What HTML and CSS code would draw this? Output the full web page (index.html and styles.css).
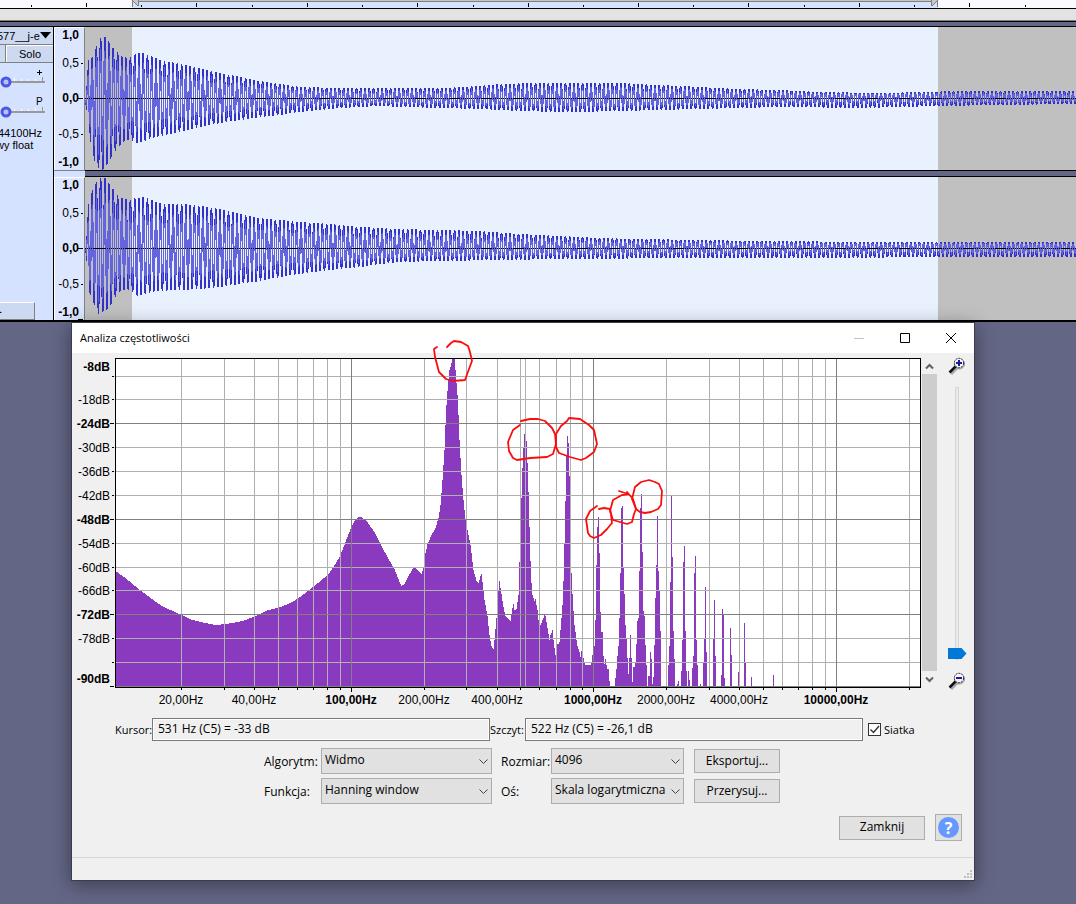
FILE: index.html
```html
<!DOCTYPE html>
<html lang="pl">
<head>
<meta charset="utf-8">
<title>Analiza częstotliwości</title>
<link rel="stylesheet" href="styles.css">
</head>
<body>
<main class="desktop">
  <svg class="timeline" viewBox="0 0 1076 9" preserveAspectRatio="none" shape-rendering="crispEdges" aria-hidden="true">
    <rect width="1076" height="9" fill="#f9f9ff"/>
    <rect x="132" width="806" height="8" fill="#d5e3ff"/>
    <rect x="138" width="793" height="1" fill="#c4c4c0"/>
    <rect x="138" y="1" width="793" height="1" fill="#808080"/>
    <path d="M133 0h5v6l-5-5zM932 0h5l-5 6z" fill="#c8c8c4"/>
    <path d="M132.500 0v7M138.500 0v6M132 0l6 6M937.500 0v7M931.500 0v6M938 0l-6 6" stroke="#808080" fill="none"/>
    <path id="ticks" stroke="#000" fill="none"/>
    <rect y="8" width="1076" height="1"/>
  </svg>
  <div class="strip"></div>
  <div class="gutter"></div>
  <section class="track">
    <aside class="panel">
      <button class="track-name"><span>577__j-e</span><svg width="11" height="7" viewBox="0 0 11 7"><path d="M0 0h11L5.500 6.500z"/></svg></button>
      <div class="mute-solo"><button class="mute" aria-label="Wycisz"></button><button class="solo">Solo</button></div>
      <svg class="knobs" viewBox="0 63 53 60" width="53" height="60">
        <g fill="none"><path d="M11 82h34" stroke="#999" stroke-width="2"/><path d="M14.500 78v3M21.500 79v2M28.500 79v2M35.500 79v2" stroke="#fff"/><path d="M42.500 77v5" stroke="#999"/><circle cx="6" cy="82" r="4" fill="#b9c2ee" stroke="#4a58e8" stroke-width="3"/></g>
        <g fill="none"><path d="M11 112h34" stroke="#999" stroke-width="2"/><path d="M14.500 109v2M21.500 109v2M28.500 109v2M35.500 108v3" stroke="#fff"/><path d="M42.500 107v5" stroke="#999"/><circle cx="6" cy="112" r="4" fill="#b9c2ee" stroke="#4a58e8" stroke-width="3"/></g>
        <path d="M37 72.500h5M39.500 70v5" stroke="#000"/>
        <text x="36" y="105" font-size="10">P</text>
      </svg>
      <p class="rate">44100Hz</p>
      <p class="format">wy float</p>
      <button class="collapse" aria-label="Zwiń"><svg width="5" height="4" viewBox="0 0 5 4"><path d="M0 0l5 4H0z"/></svg></button>
    </aside>
    <div class="channels">
      <div class="channel">
        <div class="scale"><b>1,0</b><span>0,5</span><b>0,0</b><span>-0,5</span><b>-1,0</b>
          <svg class="marks" width="6" height="143" viewBox="0 0 6 143"><path d="M3 36.500h2M0 71.500h5M3 107.500h2" stroke="#000"/></svg></div>
        <svg class="wave" data-wave="0" viewBox="0 0 991 143" preserveAspectRatio="none" shape-rendering="crispEdges"></svg>
      </div>
      <div class="divider"><i></i><b></b></div>
      <div class="channel">
        <div class="scale"><b>1,0</b><span>0,5</span><b>0,0</b><span>-0,5</span><b>-1,0</b>
          <svg class="marks" width="6" height="143" viewBox="0 0 6 143"><path d="M3 36.500h2M0 71.500h5M3 107.500h2M0 142.500h5" stroke="#000"/></svg></div>
        <svg class="wave" data-wave="1" viewBox="0 0 991 143" preserveAspectRatio="none" shape-rendering="crispEdges"></svg>
      </div>
    </div>
  </section>

  <section class="dialog" role="dialog" aria-labelledby="dialog-title">
    <header class="titlebar">
      <h1 id="dialog-title">Analiza częstotliwości</h1>
      <button aria-label="Minimalizuj"><svg width="10" height="10"><path d="M0 5.500h10" stroke="#c4c4c4"/></svg></button>
      <button aria-label="Maksymalizuj"><svg width="10" height="10"><path d="M.5.500h9v9h-9z" stroke="#000" fill="none"/></svg></button>
      <button aria-label="Zamknij okno"><svg width="10" height="10"><path d="M0 0l10 10M10 0L0 10" stroke="#000" fill="none"/></svg></button>
    </header>
    <div class="plot-row">
      <svg class="plot" width="849" height="356" viewBox="72 353 849 356">
        <g shape-rendering="crispEdges">
          <rect x="115" y="358" width="806" height="330"/>
          <rect x="116" y="359" width="804" height="328" fill="#fff"/>
          <path id="spectrum" fill="#8a3abe"/>
          <path id="grid-light" stroke="#b0b0b0" fill="none"/>
          <path id="grid-dark" stroke="#808080" fill="none"/>
          <path id="axis-marks" stroke="#000" fill="none"/>
        </g>
        <g id="axis-labels" font-size="12"></g>
        <g fill="none" stroke="#fb0d0d" stroke-width="1.800" stroke-linejoin="round" stroke-linecap="round">
          <path d="M437 347l-3 2 1 8 4 15 7 7 7 2 12-1 4-11 3-8-2-9-2-6-7-4-7-1-3 2-4 4"/>
          <path d="M521 421l9-2 8 0 7 2 7 7 3 6 1 10-3 10-6 3-17 1-13 2-4-2-4-7-1-9 5-12 7-5"/>
          <path d="M569 418l11 1 9 6 5 5 3 14-3 8-8 6-5 2-11-3-11-4-3-6 0-13 5-8 6-5z"/>
          <path d="M597 506l-7 5-4 8 2 14 2 3 4 2 7-3 6-6 5-6-1-9-1-5-6-1-5 1"/>
          <path d="M619 491l9 3-6 1-9 5-3 11 3 9 7 2 7 2 5-2 2-8 2-5-3-10-6-7"/>
          <path d="M641 482l8-2 6 2 4 2 3 7-1 14-3 4-7 3-6 1-5-1-4-3-4-10 3-12z"/>
        </g>
      </svg>
      <div class="scrollbar">
        <button aria-label="W górę"><svg width="9" height="7"><path d="M1 5.500l3.500-3.500L8 5.500" fill="none" stroke="#606060" stroke-width="2"/></svg></button>
        <div class="bar"></div>
        <button aria-label="W dół"><svg width="9" height="7"><path d="M1 1.500L4.500 5 8 1.500" fill="none" stroke="#606060" stroke-width="2"/></svg></button>
      </div>
      <div class="zoom">
        <svg width="18" height="18" viewBox="0 0 18 18"><path d="M3 17l7-7" stroke="#aaa" stroke-width="3"/><circle cx="11.500" cy="7" r="5" fill="#bbb" stroke="#999"/><path d="M1.500 15.500l6-6" stroke="#111" stroke-width="2.500"/><circle cx="11" cy="6" r="4.700" fill="#f5f5fa" stroke="#222" stroke-dasharray="2 1"/><path d="M8 6h6M11 3v6" stroke="#1717a8" stroke-width="2"/></svg>
        <input type="range" min="0" max="100" value="100" aria-label="Powiększenie">
        <svg width="18" height="18" viewBox="0 0 18 18"><path d="M3 17l7-7" stroke="#aaa" stroke-width="3"/><circle cx="11.500" cy="7" r="5" fill="#bbb" stroke="#999"/><path d="M1.500 15.500l6-6" stroke="#111" stroke-width="2.500"/><circle cx="11" cy="6" r="4.700" fill="#f5f5fa" stroke="#222" stroke-dasharray="2 1"/><path d="M8 6h6" stroke="#1717a8" stroke-width="2"/></svg>
      </div>
    </div>
    <div class="readouts">
      <label class="cursor-label" for="cursor">Kursor:</label><input id="cursor" readonly value="531 Hz (C5) = -33 dB">
      <label class="peak-label" for="peak">Szczyt:</label><input id="peak" readonly value="522 Hz (C5) = -26,1 dB">
      <label class="check"><input type="checkbox" checked><svg width="13" height="13"><path d="M2.500 6.500l3 3 5.500-6.500" fill="none" stroke="#333" stroke-width="1.400"/></svg>Siatka</label>
    </div>
    <div class="options">
      <label for="algorithm">Algorytm:</label>
      <span class="combo"><select id="algorithm"><option>Widmo</option></select><svg width="9" height="6"><path d="M.5.500l4 4 4-4" fill="none" stroke="#444"/></svg></span>
      <label for="size">Rozmiar:</label>
      <span class="combo"><select id="size"><option>4096</option></select><svg width="9" height="6"><path d="M.5.500l4 4 4-4" fill="none" stroke="#444"/></svg></span>
      <button class="push">Eksportuj...</button>
      <label for="function">Funkcja:</label>
      <span class="combo"><select id="function"><option>Hanning window</option></select><svg width="9" height="6"><path d="M.5.500l4 4 4-4" fill="none" stroke="#444"/></svg></span>
      <label for="axis">Oś:</label>
      <span class="combo"><select id="axis"><option>Skala logarytmiczna</option></select><svg width="9" height="6"><path d="M.5.500l4 4 4-4" fill="none" stroke="#444"/></svg></span>
      <button class="push">Przerysuj...</button>
    </div>
    <div class="actions"><button class="push">Zamknij</button><button class="help" aria-label="Pomoc"><span>?</span></button></div>
    <footer class="statusbar"><svg width="9" height="9" viewBox="0 0 9 9"><path d="M6 0h2v2H6zM3 3h2v2H3zM6 3h2v2H6zM0 6h2v2H0zM3 6h2v2H3zM6 6h2v2H6z" fill="#bfbfbf"/></svg></footer>
  </section>
</main>
<script src="app.js"></script>
</body>
</html>
```

FILE: styles.css
```css
* { box-sizing: border-box; }
body { margin: 0; background: #636685; font-family: "Liberation Sans", Arial, sans-serif; font-size: 12px; color: #000; }
button { margin: 0; padding: 0; border: 0; background: none; font: inherit; color: inherit; }
p, h1 { margin: 0; }
svg { display: block; flex: none; }
.desktop { position: relative; min-height: 100vh; overflow: hidden; }

.timeline { width: 100%; height: 9px; }
.strip { height: 12px; background: #e3e3e3; border-bottom: 1px solid #808080; }
.gutter { height: 6px; border-top: 1px solid #000; border-bottom: 1px solid #000; background: #636685; }
.track { display: flex; border-bottom: 2px solid #000; }
.panel { width: 54px; display: flex; flex-direction: column; overflow: hidden; border-right: 1px solid #000; background: #d5e2ff; font-size: 11px; }
.track-name { display: flex; align-items: center; height: 18px; margin-left: -3px; border-bottom: 1px solid #808080; background: #cdd9f0; white-space: nowrap; }
.mute-solo { display: flex; height: 18px; border-bottom: 1px solid #808080; background: #cdd9f0; }
.mute { width: 6px; border-right: 1px solid #808080; }
.solo { flex: 1; border-left: 1px solid #fff; border-top: 1px solid #fff; }
.rate, .format { height: 12px; line-height: 12px; white-space: nowrap; }
.rate { margin: 4px 0 0 -2px; }
.format { margin-left: -4px; }
.collapse { margin-top: auto; width: 35px; height: 18px; border-top: 1px solid #fff; border-right: 1px solid #808080; border-bottom: 1px solid #808080; background: #cdd9f0; }
.collapse svg { margin-left: -3px; }

.channels { flex: 1; min-width: 0; }
.channel { display: flex; height: 143px; }
.scale { position: relative; width: 31px; padding-right: 5px; display: grid; grid-template-rows: 28px 35px 36px 28px 14px; border-right: 1px solid #808080; border-left: 1px solid #fff; border-top: 1px solid #fff; background: #dce7ff; line-height: 14px; text-align: right; }
.marks { position: absolute; right: 0; top: -1px; }
.wave { flex: 1 1 0; min-width: 0; width: 100%; height: 143px; }
.divider { display: flex; height: 7px; }
.divider i { width: 31px; border-top: 1px solid #808080; background: #d5e2ff; }
.divider b { flex: 1; border-top: 1px solid #000; border-bottom: 1px solid #000; background: #636685; }

.dialog { position: absolute; left: 71px; top: 322px; width: 904px; border: 1px solid #3b3d4c; background: #f0f0f0; box-shadow: 0 4px 18px rgba(0, 0, 0, .4); font-family: "Open Sans", "Noto Sans", sans-serif; font-size: 12px; }
.titlebar { display: flex; height: 30px; background: #fff; }
.titlebar h1 { flex: 1; padding-left: 8px; font-size: 11px; line-height: 30px; font-weight: 400; }
.titlebar button { width: 46px; display: grid; place-items: center; }
.plot-row { display: flex; }
.plot { overflow: visible; position: relative; font-family: "Liberation Sans", Arial, sans-serif; }
.scrollbar { width: 15px; height: 329px; margin: 5px 0 0 1px; display: flex; flex-direction: column; }
.scrollbar button { height: 16px; display: grid; place-items: center; }
.bar { flex: 1; background: #cdcdcd; }
.zoom { width: 19px; height: 333px; margin: 4px 0 0 10px; display: flex; flex-direction: column; justify-content: space-between; align-items: center; }
.zoom input { appearance: none; writing-mode: vertical-lr; direction: ltr; width: 19px; height: 273px; margin: 0; background: none; }
.zoom input::-webkit-slider-runnable-track { width: 4px; height: 100%; border: 1px solid #d6d6d6; background: #e7eaea; }
.zoom input::-webkit-slider-thumb { appearance: none; width: 19px; height: 11px; margin-left: -8px; background: #0078d7; clip-path: polygon(0 0, 14px 0, 100% 50%, 14px 100%, 0 100%); }
.readouts { display: flex; align-items: center; height: 23px; margin: 9px 0 0 43px; }
.readouts label { font-size: 11px; }
.cursor-label { width: 37px; }
.peak-label { width: 35px; }
.readouts > input { width: 338px; height: 23px; padding: 0 5px 2px; border: 1px solid #7a7a7a; outline: 1px solid #fff; outline-offset: -2px; background: #f0f0f0; font: inherit; }
.check { display: flex; align-items: center; gap: 3px; margin-left: 5px; position: relative; }
.check input { appearance: none; width: 13px; height: 13px; margin: 0; border: 1px solid #333; background: #fff; }
.check svg { position: absolute; left: 0; }
.options { display: grid; grid-template-columns: 57px 171px 59px 133px 96px; row-gap: 4px; align-items: center; margin: 7px 0 0 192px; }
.options label:nth-of-type(even) { padding-left: 9px; }
.options .push { margin-left: 10px; }
.combo { position: relative; }
.combo select { appearance: none; display: block; width: 100%; height: 26px; padding: 0 3px 3px; border: 1px solid #adadad; border-radius: 0; background: #e1e1e1; color: #000; font: inherit; }
.combo svg { position: absolute; right: 4px; top: 11px; pointer-events: none; }
.push { width: 86px; height: 24px; padding-bottom: 2px; border: 1px solid #adadad; background: #e1e1e1; }
.actions { display: flex; justify-content: flex-end; align-items: center; gap: 10px; margin: 10px 12px 0 0; }
.help { display: grid; place-items: center; width: 27px; height: 27px; border: 1px solid #adadad; background: #e1e1e1; }
.help span { display: grid; place-items: center; width: 21px; height: 21px; border-radius: 50%; background: #6699ff; color: #fff; font-size: 16px; font-weight: 700; }
.statusbar { display: flex; justify-content: flex-end; align-items: flex-end; height: 23px; margin-top: 16px; border-top: 1px solid #d7d7d7; padding: 0 1px 1px 0; }
```

FILE: app.js
```js
const interp = (pts, x) => {
  let i = 0;
  while (i < pts.length - 2 && pts[i + 1][0] <= x) i++;
  const [x0, y0] = pts[i], [x1, y1] = pts[i + 1];
  return y0 + (y1 - y0) * Math.min(1, Math.max(0, (x - x0) / (x1 - x0)));
};
const pairs = s => s.trim().split(/\s+/).map(p => p.split(',').map(Number));

// Timeline ticks
let ticks = '';
for (let i = 0; i < 10; i++) {
  ticks += `M${Math.round(31 + i * 110.4)}.5 5v2`;
  if (i < 9) ticks += `M${Math.round(86 + i * 110.4)}.5 3v4`;
}
document.getElementById('ticks').setAttribute('d', ticks);

// Upper and lower envelopes of each channel, as x,y pairs
const envelopes = [
  { base: 27, mid: 98,
    top: pairs('85,90 88,60 93,56 97,42 101,37 105,37 110,44 115,50 120,56 128,58 132,56 136,53 144,53 150,56 160,60 180,64 200,68 220,73 240,77 260,81 280,84 300,87 340,88 440,88 460,87 500,84 530,83 620,83 660,85 700,87 740,89 780,90 820,92 880,93 920,92 960,91 1077,91'),
    bottom: pairs('85,104 87,115 90,141 94,160 99,169 103,169 107,163 112,154 118,146 124,140 130,139 137,142 145,140 155,136 170,133 200,126 220,122 240,119 260,116 280,114 300,111 320,109 340,107 380,105 400,106 440,107 480,108 520,110 560,111 580,111 620,110 660,109 700,108 740,107 780,106 860,107 900,106 940,105 1000,104 1077,103') },
  { base: 177, mid: 248,
    top: pairs('85,243 88,204 93,186 97,180 101,177 105,178 109,184 114,190 118,197 131,200 134,198 145,197 150,199 158,203 165,204 185,204 200,206 220,209 240,214 260,218 280,220 300,222 320,223 340,225 360,227 400,229 440,230 480,231 520,234 560,236 600,238 640,239 700,240 760,241 880,242 1077,242'),
    bottom: pairs('85,252 86,260 89,292 94,304 98,313 103,311 108,308 112,301 116,295 120,290 126,288 132,291 137,295 145,293 155,290 180,289 200,288 220,286 240,283 260,280 280,276 300,273 320,270 340,268 360,266 380,263 400,261 440,260 500,259 560,258 700,257 1077,256') }
];
document.querySelectorAll('.wave').forEach(svg => {
  const e = envelopes[svg.dataset.wave], mid = e.mid - e.base;
  let dark = '', light = '';
  for (let x = 85; x < 1076; x++) {
    const up = e.mid - interp(e.top, x), down = interp(e.bottom, x) - e.mid;
    let lo = 1e9, hi = -1e9, sq = 0;
    for (let k = 0; k <= 14; k++) {
      const s = Math.sin((x + k / 10 - 86.9) * 2 * Math.PI / 4.265);
      const v = s > 0 ? s * up : s * down;
      lo = Math.min(lo, v); hi = Math.max(hi, v); sq += v * v;
    }
    const rms = Math.sqrt(sq / 15);
    const y0 = Math.round(mid - hi), y1 = Math.round(mid - lo) + 1;
    dark += `M${x - 85} ${y0}h1V${y1}h-1z`;
    const a = Math.max(y0, Math.round(mid - rms)), b = Math.min(y1, Math.round(mid + rms));
    if (b > a) light += `M${x - 85} ${a}h1V${b}h-1z`;
  }
  svg.innerHTML = `<rect width="991" height="143" fill="#c0c0c0"/><rect x="47" width="806" height="143" fill="#e9f1ff"/>
    <path d="M0 ${mid}.5H991" stroke="#000"/><path d="${dark}" fill="#3232c8"/><path d="${light}" fill="#6464dc"/>
    <path d="M0 ${mid}.5H991" stroke="#000" stroke-dasharray="1 1"/>`;
});

// Spectrum: smooth part, then one level per pixel column
const smooth = pairs('115,571 125,578 137,588 150,598 160,605 170,610 181,615 192,620 205,623 215,625 225,624 237,622 245,620 255,616 265,611 280,607 290,603 298,598 310,589 320,581 328,574 335,564 340,555 345,542 350,529 354,521 358,517 361,517 366,521 374,532 380,544 388,559 394,569 399,582 401,586 404,584 408,576 412,569 415,567 417,570 421,574 423,567 424,558 427,544 431,535 435,528 438,518 440,505 442,480 444,450 445,425 446,405 447,391 448,380 449,370 451,363 452,359 454,359 455,370 457,395 458,415 459,440 461,475 463,500 465,520 468,535 470,545 473,570 476,581 478,583 480,576 481,574 482,582 484,600 487,616 489,635 491,646 493,649 494,640 496,618 498,590 499,581 500,588 503,607 505,616 508,619 510,621 512,608 513,604 514,610 516,609 518,595 519,562 520,525 521,498 522,468 523,448 524,434 525,434 526,441 527,463 528,492 529,527 530,561 531,583 532,595 534,601 535,599 537,610 538,620 539,628 540,625 542,620 544,615 545,616 547,628 549,640 550,635 552,630 553,640 555,655 556,656');
const steps = pairs('556,656 557,644 559,642 560,630 561,618 562,605 563,581 564,544 565,501 566,456 567,436 568,443 569,476 570,543 571,573 572,594 573,611 574,625 575,632 576,640 577,646 578,649 579,652 580,657 581,651 583,658 584,663 585,665 591,662 592,655 593,653 594,646 595,620 596,565 597,527 598,517 599,553 600,612 601,632 603,656 604,664 605,659 606,665 607,669 609,681 610,687 615,678 616,669 617,656 618,646 619,618 620,573 621,508 622,506 623,567 624,594 625,625 626,639 627,658 628,674 629,658 630,635 631,658 632,682 633,667 635,663 636,644 637,621 638,618 639,571 640,508 641,494 642,552 643,611 644,616 645,645 646,665 647,687 648,676 650,652 651,659 652,684 653,677 654,645 655,598 656,565 657,516 658,571 659,591 660,631 661,687 668,665 669,646 670,582 671,496 672,557 673,631 674,659 675,687 677,684 678,681 679,687 681,671 682,640 683,562 684,546 685,631 686,671 687,687 688,671 689,680 690,687 692,668 693,656 694,573 695,556 696,640 697,665 698,687 700,684 701,687 703,663 704,639 705,587 706,652 707,687 713,639 714,600 715,656 716,687 721,675 722,609 723,614 724,678 725,687 730,628 731,655 732,687 738,672 739,687 744,623 745,663 746,687 751,677 752,687 773,675 774,687');
let d = '', si = 0;
for (let x = 116; x < 775; x++) {
  let y;
  if (x < 556) y = Math.round(interp(smooth, x));
  else {
    while (si < steps.length - 1 && steps[si + 1][0] <= x) si++;
    y = steps[si][1];
  }
  if (y < 687) d += `M${x} ${y}h1V687h-1z`;
}
document.getElementById('spectrum').setAttribute('d', d);

const vLight = [181, 224, 254, 278, 297, 313, 327, 340, 424, 466, 497, 520, 525, 539, 556, 570, 582, 666, 709, 739, 763, 782, 798, 812, 825, 909];
const vDark = [351, 593, 836];
const hLight = [376, 399, 447, 471, 495, 543, 567, 590, 638, 662], hDark = [423, 519, 614];
const col = x => `M${x}.5 359V687`, row = y => `M116 ${y}.5H920`;
const set = (id, v) => document.getElementById(id).setAttribute('d', v);
set('grid-light', vLight.map(col).join('') + hLight.map(row).join(''));
set('grid-dark', vDark.map(col).join('') + [...hDark, 686].map(row).join(''));
set('axis-marks', hLight.map(y => `M112 ${y}.5h2`).join('') + [...hDark, 686].map(y => `M110 ${y}.5h4`).join('')
  + vLight.filter(x => x !== 525).map(x => `M${x}.5 688v2`).join('') + vDark.map(x => `M${x}.5 688v4`).join(''));

const text = (x, y, s, anchor, bold) => `<text x="${x}" y="${y}" text-anchor="${anchor}"${bold ? ' font-weight="700"' : ''}>${s}</text>`;
document.getElementById('axis-labels').innerHTML =
  [[371, -8, 1], [404, -18], [428, -24, 1], [452, -30], [476, -36], [500, -42], [524, -48, 1], [548, -54], [572, -60], [595, -66], [619, -72, 1], [643, -78], [683, -90, 1]]
    .map(([y, v, b]) => text(110, y, v + 'dB', 'end', b)).join('')
  + [[181, '20'], [254, '40'], [351, '100', 1], [424, '200'], [497, '400'], [593, '1000', 1], [666, '2000'], [739, '4000'], [836, '10000', 1]]
    .map(([x, v, b]) => text(x, 704, v + ',00Hz', 'middle', b)).join('');
```
